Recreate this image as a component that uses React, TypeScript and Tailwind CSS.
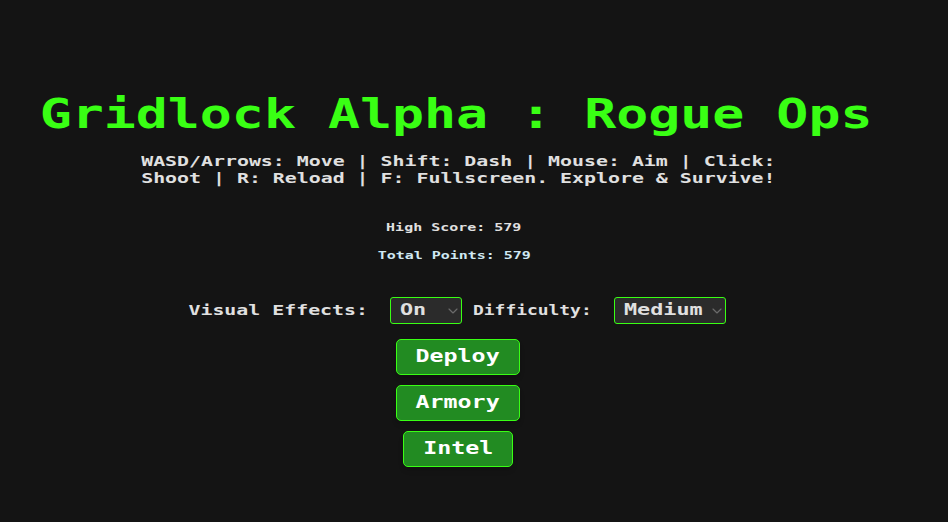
import { ChevronDown } from 'lucide-react'

const font = { fontFamily: '"DejaVu Sans Mono", monospace' }

function Select({ value, width }: { value: string; width: string }) {
  return (
    <div className={`flex h-[27px] items-center justify-between rounded-[3px] border border-[#39ff14] bg-[#2b2b2b] pl-[9px] ${width}`}>
      <span className="inline-block origin-left scale-x-[1.45] text-[15px] font-bold whitespace-nowrap text-[#e0e0e0]">{value}</span>
      <ChevronDown className="h-4 w-4 text-[#6b6b6b]" strokeWidth={1.75} />
    </div>
  )
}

function MenuButton({ label, width }: { label: string; width: string }) {
  return (
    <div className={`flex h-9 items-center justify-center rounded-[5px] border border-[#39ff14] bg-[#228b22] pb-0.5 shadow-md ${width}`}>
      <span className="inline-block scale-x-[1.33] text-[17.5px] font-bold text-white">{label}</span>
    </div>
  )
}

function Label({ text, width, scale }: { text: string; width: string; scale: string }) {
  return (
    <div className={`flex justify-center ${width}`}>
      <span className={`inline-block text-[14px] font-bold whitespace-nowrap text-[#e0e0e0] ${scale}`}>{text}</span>
    </div>
  )
}

export default function App() {
  return (
    <div className="h-[522px] w-[948px] overflow-hidden bg-[#141414]" style={font}>
      <div className="flex w-[916px] flex-col items-center pt-[88px]">
        <h1 className="mr-1 scale-x-[1.33] text-[40px] leading-[52px] font-bold whitespace-nowrap text-[#39ff14]">Gridlock Alpha : Rogue Ops</h1>

        <div className="mt-[13px] flex flex-col items-center text-[14px] leading-[17px] font-bold text-[#e0e0e0]">
          <span className="inline-block scale-x-[1.42] whitespace-nowrap">WASD/Arrows: Move | Shift: Dash | Mouse: Aim | Click:</span>
          <span className="inline-block scale-x-[1.42] whitespace-nowrap">Shoot | R: Reload | F: Fullscreen. Explore &amp; Survive!</span>
        </div>

        <p className="mt-[34px] mr-[9px] scale-x-[1.36] text-[11px] leading-[14px] font-bold text-[#e0e0e0]">High Score: 579</p>
        <p className="mt-[14px] mr-[8px] scale-x-[1.36] text-[11px] leading-[14px] font-bold text-[#cfe8f3]">Total Points: 579</p>

        <div className="mt-[34px] flex items-center">
          <Label text="Visual Effects:" width="w-[177px]" scale="scale-x-[1.42]" />
          <div className="mr-[11px] ml-[23px]"><Select value="On" width="w-[72px]" /></div>
          <Label text="Difficulty:" width="w-[118px]" scale="scale-x-[1.28]" />
          <div className="ml-[23px]"><Select value="Medium" width="w-[112px]" /></div>
        </div>

        <div className="mt-[15px] flex flex-col items-center gap-[10px]">
          <MenuButton label="Deploy" width="w-[124px]" />
          <MenuButton label="Armory" width="w-[124px]" />
          <MenuButton label="Intel" width="w-[110px]" />
        </div>
      </div>
    </div>
  )
}
